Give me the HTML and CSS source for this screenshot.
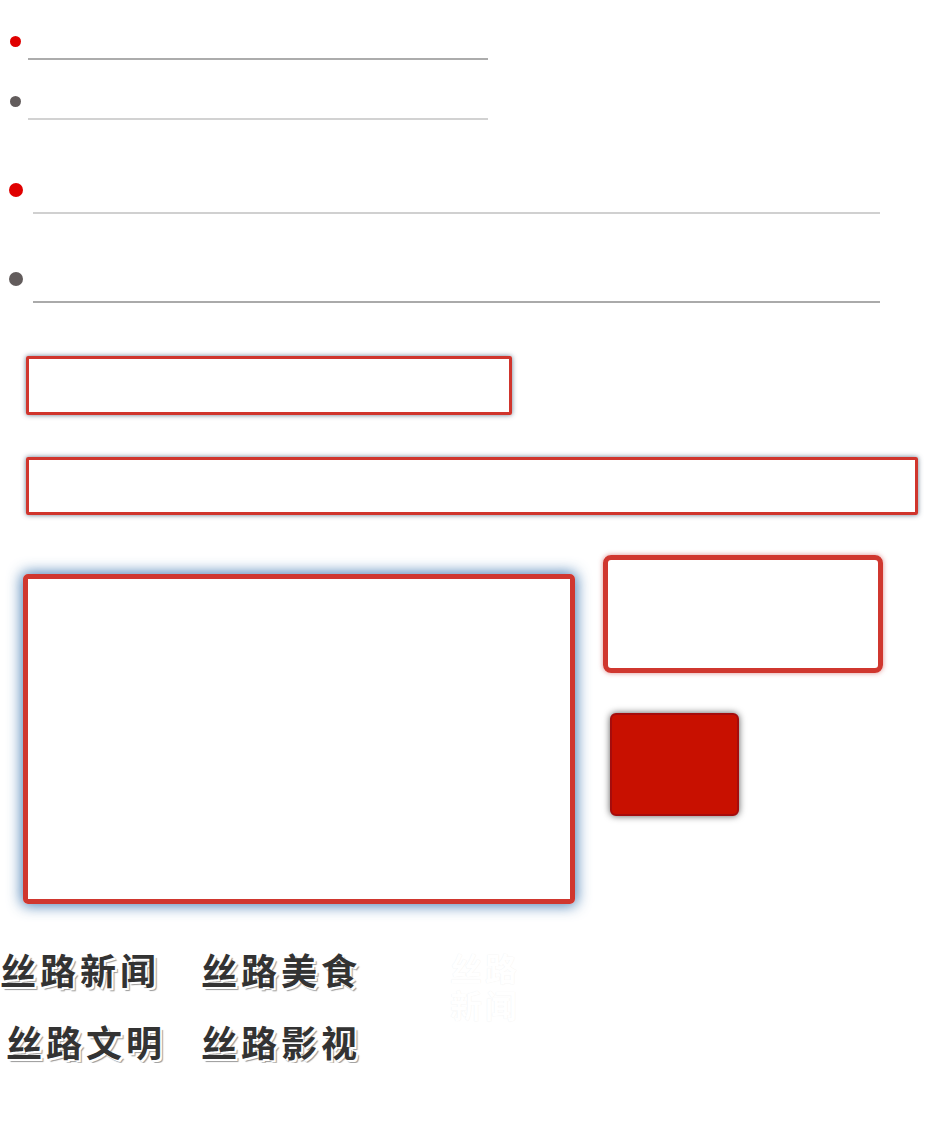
FILE: index.html
```html
<!doctype html>
<html lang="zh">
<head>
  <meta charset="UTF-8">
  <title>丝路</title>
  <link rel="stylesheet" href="styles.css">
</head>
<body>
  <div class="page">
    <ul class="lines small">
      <li class="on"><span class="dot"></span><span class="line"></span></li>
      <li><span class="dot"></span><span class="line"></span></li>
    </ul>
    <ul class="lines big">
      <li class="on"><span class="dot"></span><span class="line"></span></li>
      <li><span class="dot"></span><span class="line"></span></li>
    </ul>

    <div class="box box-short"></div>
    <div class="box box-long"></div>

    <div class="panel">
      <div class="area"></div>
      <div class="side">
        <div class="card"></div>
        <div class="btn"></div>
      </div>
    </div>

    <div class="menu">
      <ul class="nav">
        <li>丝路新闻</li>
        <li>丝路美食</li>
        <li class="shift">丝路文明</li>
        <li>丝路影视</li>
      </ul>
      <div class="ghost">丝路新闻</div>
    </div>
  </div>
</body>
</html>
```

FILE: styles.css
```css
* { margin: 0; padding: 0; list-style: none; box-sizing: border-box; }
body { background: #fff; font-family: "Noto Sans CJK SC", sans-serif; }
.page { width: 950px; padding-top: 36px; }

/* 列表线条 */
.lines { display: flex; flex-direction: column; }
.lines li { display: flex; align-items: flex-start; padding-left: 10px; }
.lines .dot { border-radius: 50%; background: #625c5c; }
.lines .on .dot { background: #e00000; }
.small { gap: 36px; }
.small li { height: 24px; }
.small .dot { width: 11px; height: 11px; }
.small .line { height: 24px; width: 460px; margin-left: 7px; border-bottom: 2px solid #d2d2d2; }
.small .on .line { border-bottom-color: #acacac; }
.big { gap: 58px; margin-top: 63px; }
.big li { height: 31px; padding-left: 9px; }
.big .dot { width: 14px; height: 14px; }
.big .line { height: 31px; width: 847px; margin-left: 10px; border-bottom: 2px solid #aaa; }
.big .on .line { border-bottom-color: #d0d0d0; }

/* 输入框 */
.box { margin-left: 26px; border: 3px solid #d0352d; border-radius: 2px; box-shadow: 0 0 5px rgba(40, 65, 95, .7); }
.box-short { width: 486px; height: 59px; margin-top: 53px; }
.box-long { width: 892px; height: 58px; margin-top: 42px; }

.panel { display: flex; align-items: flex-start; margin-top: 40px; }
.area { width: 552px; height: 330px; margin: 19px 0 0 23px; border: 5px solid #d0372f; border-radius: 5px; box-shadow: 0 0 14px 2px rgba(50, 110, 170, .85); }
.side { margin-left: 28px; }
.card { width: 280px; height: 118px; border: 5px solid #d0372f; border-radius: 8px; box-shadow: 0 0 5px rgba(190, 30, 30, .5); }
.btn { width: 129px; height: 103px; margin: 40px 0 0 7px; background: #c81000; border: 2px solid #a50c0c; border-radius: 6px; box-shadow: 0 0 7px rgba(0, 0, 0, .65); }

/* 文字 */
.menu { display: flex; margin-top: 43px; }
.nav { display: grid; grid-template-columns: 201px 200px; row-gap: 28px; }
.nav li { font-size: 36px; font-weight: bold; line-height: 44px; letter-spacing: 4px; color: #333; text-shadow: 1px 1px 0 #fff, 2px 2px 0 #fff, 3px 3px 1px #999; white-space: nowrap; }
.nav .shift { padding-left: 6px; }
.ghost { width: 72px; margin: 2px 0 0 49px; font-size: 32px; font-weight: bold; line-height: 37px; letter-spacing: 3px; color: #fff; text-shadow: 0 0 1px rgba(0, 0, 0, .08); }
```
